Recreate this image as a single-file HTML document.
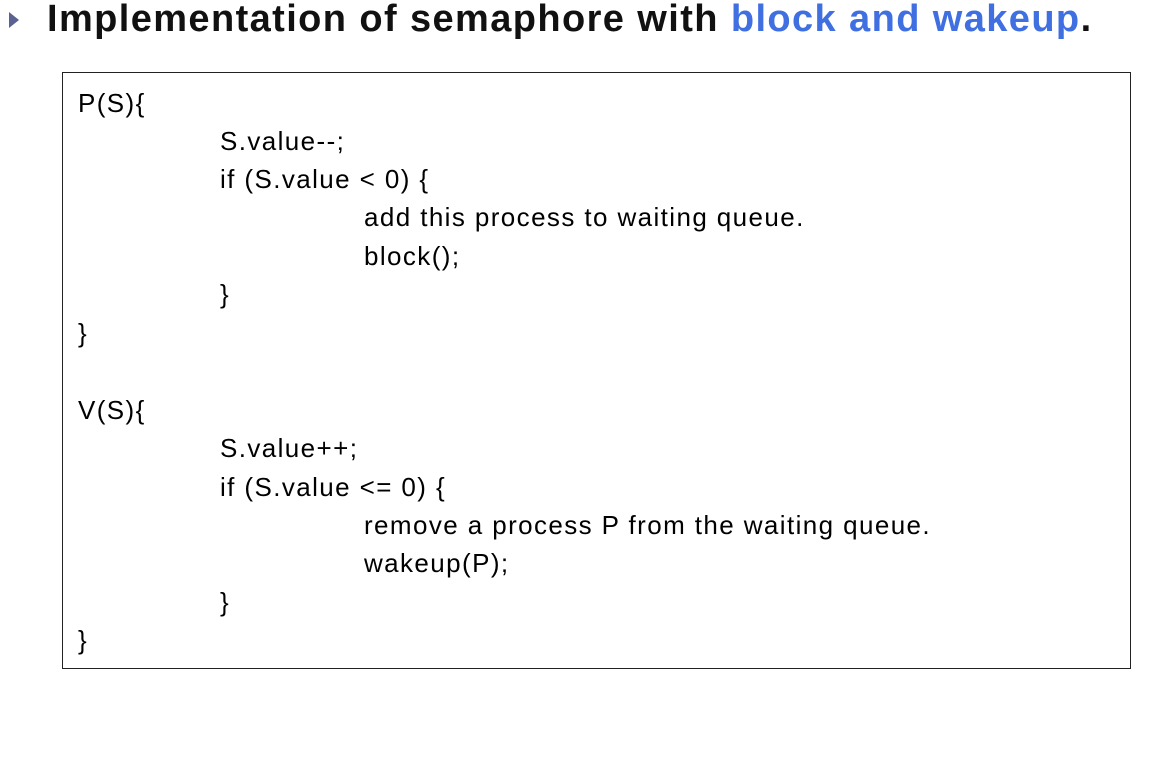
<!DOCTYPE html>
<html><head><style>
body{margin:0;width:1152px;height:772px;background:#fff;position:relative;overflow:hidden;font-family:"Liberation Sans",sans-serif;}
.tri{position:absolute;left:9px;top:12px;width:0;height:0;border-top:8px solid transparent;border-bottom:8px solid transparent;border-left:10px solid #5b6190;}
.title{position:absolute;left:47px;top:-3px;font-weight:bold;font-size:38px;letter-spacing:1.4px;line-height:44px;color:#111;white-space:nowrap;}
.title span{color:#3f6fe0;}
.box{position:absolute;left:62px;top:72px;width:1067px;height:595px;border:1px solid #222;}
.l{position:absolute;font-size:26px;letter-spacing:1.4px;line-height:30px;color:#000;white-space:nowrap;}
</style></head><body>
<div class="tri"></div>
<div class="title">Implementation of semaphore with <span>block and wakeup</span>.</div>
<div class="box"></div>
<div class="l" style="left:78px;top:88px">P(S){</div>
<div class="l" style="left:220px;top:126px">S.value--;</div>
<div class="l" style="left:220px;top:164px">if (S.value &lt; 0) {</div>
<div class="l" style="left:364px;top:202px">add this process to waiting queue.</div>
<div class="l" style="left:364px;top:241px">block();</div>
<div class="l" style="left:220px;top:279px">}</div>
<div class="l" style="left:78px;top:318px">}</div>
<div class="l" style="left:78px;top:395px">V(S){</div>
<div class="l" style="left:220px;top:433px">S.value++;</div>
<div class="l" style="left:220px;top:472px">if (S.value &lt;= 0) {</div>
<div class="l" style="left:364px;top:510px">remove a process P from the waiting queue.</div>
<div class="l" style="left:364px;top:548px">wakeup(P);</div>
<div class="l" style="left:220px;top:587px">}</div>
<div class="l" style="left:78px;top:625px">}</div>
</body></html>
